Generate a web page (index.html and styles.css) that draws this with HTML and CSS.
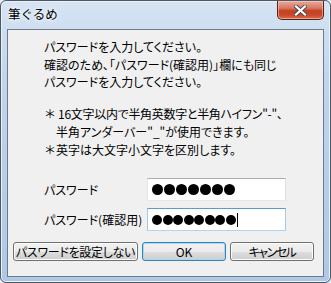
FILE: index.html
```html
<!DOCTYPE html>
<html lang="ja">
<head>
  <meta charset="UTF-8">
  <title>筆ぐるめ</title>
  <link rel="stylesheet" href="styles.css">
</head>
<body>
  <div class="window">
    <div class="titlebar">
      <span class="title">筆ぐるめ</span>
      <span class="close">
        <svg width="13" height="11" viewBox="0 0 13 11">
          <path d="M2 1.5 L11 9.5 M11 1.5 L2 9.5" stroke="#4a4a4a" stroke-width="4" stroke-linecap="square"/>
          <path d="M2 1.5 L11 9.5 M11 1.5 L2 9.5" stroke="#ffffff" stroke-width="2.2" stroke-linecap="square"/>
        </svg>
      </span>
    </div>

    <div class="client">
      <div class="message">
        <p>パスワードを入力してください。</p>
        <p>確認のため、「パスワード(確認用)」欄にも同じ<br>パスワードを入力してください。</p>
      </div>

      <div class="notes">
        <p class="tight"><span class="mark">＊</span> 16文字以内で半角英数字と半角ハイフン"-"、</p>
        <p class="indent">半角アンダーバー"_"が使用できます。</p>
        <p><span class="mark">＊</span>英字は大文字小文字を区別します。</p>
      </div>

      <div class="fields">
        <label class="label">パスワード</label>
        <div class="textbox">
          <span class="dots"><i></i><i></i><i></i><i></i><i></i><i></i><i></i></span>
        </div>
        <label class="label">パスワード(確認用)</label>
        <div class="textbox focused">
          <span class="dots small"><i></i><i></i><i></i><i></i><i></i><i></i><i></i><i></i></span>
          <span class="caret"></span>
        </div>
      </div>

      <div class="buttons">
        <button class="btn wide">パスワードを設定しない</button>
        <button class="btn default">OK</button>
        <button class="btn narrow-text">キャンセル</button>
      </div>
    </div>
  </div>
</body>
</html>
```

FILE: styles.css
```css
html, body {
  margin: 0;
  background: #e8eef5;
}

body {
  width: 331px;
  height: 283px;
  font-family: "Noto Sans CJK JP", "Noto Sans", sans-serif;
  font-size: 12px;
  color: #000;
}

p {
  margin: 0;
}

.window {
  box-sizing: border-box;
  width: 331px;
  height: 283px;
  display: flex;
  flex-direction: column;
  border: 1px solid #4d5866;
  border-radius: 6px;
  background: linear-gradient(to bottom, #d6e4f3 0%, #c0d4eb 30%, #aec8e6 100%);
  box-shadow: inset 0 0 0 1px #e9f1fa;
}

.titlebar {
  height: 28px;
  display: flex;
  justify-content: space-between;
  align-items: flex-start;
  flex-shrink: 0;
}

.title {
  margin: 5px 0 0 7px;
  font-size: 12.5px;
  line-height: 16px;
  text-shadow: 0 0 6px #fff, 0 0 3px #fff;
}

.close {
  box-sizing: border-box;
  width: 47px;
  height: 19px;
  margin-right: 6px;
  display: flex;
  align-items: center;
  justify-content: center;
  border: 1px solid #5b2018;
  border-top: none;
  border-radius: 0 0 5px 5px;
  background: linear-gradient(to bottom, #e8aa9a 0%, #d77862 40%, #c2401f 55%, #c84b2c 80%, #d9704f 100%);
  box-shadow: inset 0 0 0 1px rgba(255, 220, 210, 0.5);
}

.client {
  flex: 1;
  margin: 0 6px 5px 6px;
  border: 1px solid #6c7a8c;
  background: #f0f0f0;
  display: flex;
  flex-direction: column;
  font-feature-settings: "palt";
}

.message {
  padding: 8px 0 0 36px;
  line-height: 17px;
}

.message p + p {
  margin-top: 1px;
}

.notes {
  padding: 15px 0 0 36px;
  line-height: 18px;
}

.tight {
  letter-spacing: -0.3px;
}

.mark {
  font-feature-settings: normal;
}

.indent {
  padding-left: 12px;
}

.fields {
  display: grid;
  grid-template-columns: 103px 139px;
  row-gap: 7px;
  align-items: center;
  padding: 19px 0 0 36px;
}

.label {
  line-height: 16px;
}

.textbox {
  box-sizing: border-box;
  height: 23px;
  display: flex;
  align-items: center;
  padding-left: 4px;
  background: #fff;
  border: 1px solid;
  border-color: #abadb3 #dbdfe6 #e3e9ef #e2e3ea;
}

.textbox.focused {
  border-color: #5d98cf #a4c9e8 #b3d4ef #a4c9e8;
}

.dots {
  display: flex;
  gap: 1px;
}

.dots i {
  width: 11px;
  height: 11px;
  border-radius: 50%;
  background: #000;
}

.dots.small {
  gap: 0.5px;
}

.dots.small i {
  width: 10px;
  height: 10px;
}

.caret {
  width: 1px;
  height: 14px;
  margin-left: 1px;
  background: #000;
}

.buttons {
  display: flex;
  gap: 4px;
  padding: 11px 0 0 5px;
}

.btn {
  box-sizing: border-box;
  width: 84px;
  height: 19px;
  padding: 0;
  font: inherit;
  font-size: 12px;
  line-height: 15px;
  color: #000;
  border: 1px solid #707070;
  border-radius: 3px;
  background: linear-gradient(to bottom, #f2f2f2 0%, #ebebeb 50%, #dddddd 50%, #cfcfcf 100%);
  box-shadow: inset 0 0 0 1px #fcfcfc;
}

.btn.wide {
  width: 125px;
  letter-spacing: -0.3px;
}

.btn.narrow-text {
  letter-spacing: -1.5px;
}

.btn.default {
  border-color: #3c7fb1;
  box-shadow: inset 0 0 0 1px #9fdcf7;
}
```
